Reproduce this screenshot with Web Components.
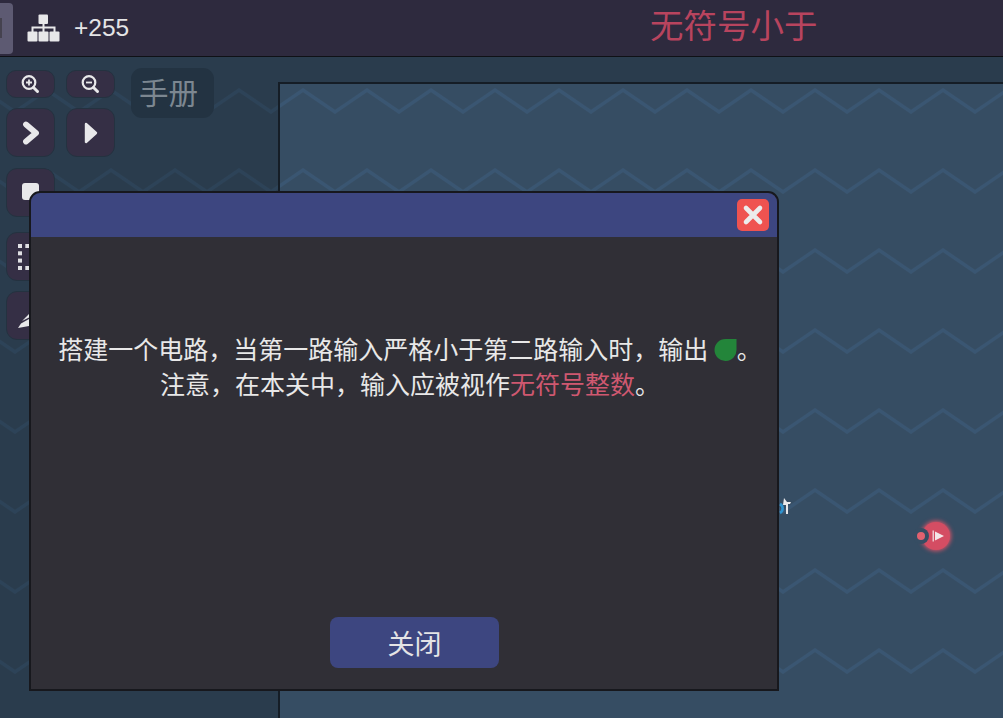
<!DOCTYPE html>
<html lang="zh">
<head>
<meta charset="utf-8">
<title>无符号小于</title>
<style>
  html, body { margin: 0; height: 100%; overflow: hidden; background: #2a3c4d; }
  body { font-family: "Liberation Sans", "Noto Sans CJK SC", sans-serif; }
  em { font-style: normal; color: #cf5870; }
</style>
</head>
<body>
<game-screen>
  <top-bar slot="top" count="+255" title-text="无符号小于"></top-bar>
  <tool-panel slot="side"></tool-panel>
  <circuit-canvas slot="main"></circuit-canvas>
  <level-dialog slot="overlay">
    搭建一个电路，当第一路输入严格小于第二路输入时，输出 <leaf-mark></leaf-mark>。<br>注意，在本关中，输入应被视作<em>无符号整数</em>。
  </level-dialog>
</game-screen>

<script>
const zigzag = (color) =>
  `url("data:image/svg+xml,${encodeURIComponent(`<svg xmlns='http://www.w3.org/2000/svg' width='64' height='80'><path d='M-16 30L16 8L48 30L80 8' fill='none' stroke='${color}' stroke-width='3.500'/></svg>`)}")`;

class GameScreen extends HTMLElement {
  connectedCallback() {
    this.attachShadow({ mode: 'open' });
    this.shadowRoot.innerHTML = `
      <style>
        :host { display: flex; flex-direction: column; position: relative; width: 1003px; height: 718px; overflow: hidden; }
        .body {
          flex: 1;
          display: grid;
          grid-template-columns: 278px 1fr;
          min-height: 0;
          background: #2a3c4d ${zigzag('#2d4358')} 31px 25px;
        }
      </style>
      <slot name="top"></slot>
      <div class="body">
        <slot name="side"></slot>
        <slot name="main"></slot>
      </div>
      <slot name="overlay"></slot>
    `;
  }
}

class TopBar extends HTMLElement {
  connectedCallback() {
    this.attachShadow({ mode: 'open' });
    this.shadowRoot.innerHTML = `
      <style>
        :host {
          display: flex;
          align-items: center;
          height: 56px;
          background: #2e2a3e;
          border-bottom: 1px solid #0f1116;
          color: #e4e4e6;
        }
        .tab { width: 13px; height: 51px; background: #5d5a72; border-radius: 0 4px 4px 0; display: flex; align-items: center; }
        .tab i { display: block; width: 2px; height: 20px; background: #45424f; }
        svg { width: 33px; height: 28px; margin-left: 14px; flex: none; }
        .count { margin-left: 14px; font-size: 24.500px; }
        .title {
          position: absolute;
          left: 650px;
          top: 2px;
          font: 33.500px/44px "Noto Sans CJK SC", "Liberation Sans", sans-serif;
          color: #b8445e;
          white-space: nowrap;
        }
      </style>
      <div class="tab"><i></i></div>
      <svg viewBox="0 0 33 28" fill="#e8e8ea">
        <rect x="11.500" y="0.500" width="9.500" height="9.500" rx="1"/>
        <rect x="0.500" y="17.500" width="10" height="10" rx="1"/>
        <rect x="11.500" y="17.500" width="10" height="10" rx="1"/>
        <rect x="22.500" y="17.500" width="10" height="10" rx="1"/>
        <path d="M15.500 9h2v3.500h11v6h-2v-4h-9v4h-2v-4h-9v4h-2v-6h11z"/>
      </svg>
      <span class="count">${this.getAttribute('count')}</span>
      <span class="title">${this.getAttribute('title-text')}</span>
    `;
  }
}

const toolIcons = {
  zoomIn: `<svg width="19" height="19" viewBox="0 0 19 19" fill="none" stroke="#e8e8ea" stroke-width="2.200"><circle cx="8" cy="7.500" r="6.300"/><path d="M12.500 12.500l4 4" stroke-width="3" stroke-linecap="round"/><path d="M5 7.500h6M8 4.500v6" stroke-width="1.800"/></svg>`,
  zoomOut: `<svg width="19" height="19" viewBox="0 0 19 19" fill="none" stroke="#e8e8ea" stroke-width="2.200"><circle cx="8" cy="7.500" r="6.300"/><path d="M12.500 12.500l4 4" stroke-width="3" stroke-linecap="round"/><path d="M5 7.500h6" stroke-width="1.800"/></svg>`,
  chevron: `<svg width="20" height="24" viewBox="0 0 20 24" fill="none" stroke="#e8e8ea" stroke-width="5.800" stroke-linecap="round" stroke-linejoin="round"><path d="M5 3.500l10 8.500l-10 8.500"/></svg>`,
  play: `<svg width="20" height="24" viewBox="0 0 20 24" fill="#e8e8ea" stroke="#e8e8ea" stroke-width="2.400" stroke-linejoin="round"><path d="M5 3L15 12L5 21z"/></svg>`,
  stop: `<svg width="20" height="20" viewBox="0 0 20 20"><rect x="1" y="0" width="17" height="17" rx="3" fill="#e8e8ea"/></svg>`,
  select: `<svg width="26" height="26" viewBox="0 0 26 26" fill="#e0e0e4"><rect x="0" y="0" width="4" height="4"/><rect x="7.300" y="0" width="4" height="4"/><rect x="14.600" y="0" width="4" height="4"/><rect x="0" y="7.300" width="4" height="4"/><rect x="0" y="14.600" width="4" height="4"/><rect x="0" y="22" width="4" height="4"/><rect x="7.300" y="22" width="4" height="4"/><rect x="14.600" y="22" width="4" height="4"/></svg>`,
  eraser: `<svg width="26" height="26" viewBox="0 0 26 26" fill="#e8e8ea"><path d="M0 25L3 20.500L11 16V23z"/><path d="M4 18L11 11L26 1V8L11 14.500z"/></svg>`,
};

class ToolButton extends HTMLElement {
  connectedCallback() {
    this.attachShadow({ mode: 'open' });
    this.shadowRoot.innerHTML = `
      <style>
        :host {
          display: flex;
          align-items: center;
          justify-content: center;
          box-sizing: border-box;
          width: 49px;
          height: 49px;
          background: #352f45;
          border: 1px solid #243240;
          border-radius: 11px;
        }
        :host([small]) { height: 28px; border-radius: 10px; }
        svg { display: block; }
      </style>
      ${toolIcons[this.getAttribute('icon')] || ''}
    `;
  }
}

class ManualChip extends HTMLElement {
  connectedCallback() {
    this.attachShadow({ mode: 'open' });
    this.shadowRoot.innerHTML = `
      <style>
        :host {
          display: flex;
          align-items: center;
          justify-content: center;
          box-sizing: border-box;
          width: 83px;
          height: 50px;
          padding: 0 8px 2px 0;
          background: #233342;
          border-radius: 11px;
          color: #7c8791;
          font: 29.500px/1 "Noto Sans CJK SC", sans-serif;
        }
      </style>
      <slot></slot>
    `;
  }
}

class ToolPanel extends HTMLElement {
  connectedCallback() {
    this.attachShadow({ mode: 'open' });
    this.shadowRoot.innerHTML = `
      <style>
        :host { display: flex; align-items: flex-start; gap: 16px; padding: 11px 0 0 6px; }
        .tools { display: grid; grid-template-columns: 49px 49px; column-gap: 11px; margin-top: 2px; }
        .zoom { margin-bottom: 10px; }
        .a { margin-bottom: 11px; }
        .b { margin-bottom: 15px; grid-column: 1; }
        .c { margin-bottom: 10px; grid-column: 1; }
        .d { grid-column: 1; }
      </style>
      <div class="tools">
        <tool-button class="zoom" small icon="zoomIn"></tool-button>
        <tool-button class="zoom" small icon="zoomOut"></tool-button>
        <tool-button class="a" icon="chevron"></tool-button>
        <tool-button class="a" icon="play"></tool-button>
        <tool-button class="b" icon="stop"></tool-button>
        <tool-button class="c" icon="select"></tool-button>
        <tool-button class="d" icon="eraser"></tool-button>
      </div>
      <manual-chip>手册</manual-chip>
    `;
  }
}

class CircuitCanvas extends HTMLElement {
  connectedCallback() {
    this.attachShadow({ mode: 'open' });
    this.shadowRoot.innerHTML = `
      <style>
        :host { display: block; margin-top: 25px; position: relative; box-sizing: border-box; height: 636px;
          background: #364d63 ${zigzag('#3a5672')} 7px -2px;
          border-left: 2px solid #151d26;
          border-top: 2px solid #151d26;
        }
        .wire { position: absolute; left: 499px; top: 413px; }
        .dot {
          position: absolute;
          left: 637px;
          top: 448px;
          width: 8px;
          height: 8px;
          border-radius: 50%;
          background: #e2616f;
          box-shadow: 0 0 0 4px #364d63;
        }
        .port {
          position: absolute;
          left: 642px;
          top: 438px;
          width: 28px;
          height: 28px;
          border-radius: 50%;
          background: #d44d63;
          box-shadow: 0 0 4px 1px #dd5468;
          display: flex;
          align-items: center;
          justify-content: center;
        }
        .port svg { margin-left: 5px; }
      </style>
      <svg class="wire" width="14" height="20" viewBox="0 0 14 20">
        <path d="M1 7c3.500 2 3.500 7 0 9" fill="none" stroke="#2f93cf" stroke-width="2.600"/>
        <path d="M5 1l3 4h4l-1 2H9v10H7V8H4z" fill="#e8e8ea"/>
      </svg>
      <div class="port">
        <svg width="13" height="12" viewBox="0 0 13 12" fill="#f3e6e8"><rect x="0.500" y="0.500" width="1.500" height="11" opacity=".8"/><path d="M3 1.500L12 6L3 10.500z"/></svg>
      </div>
      <span class="dot"></span>
    `;
  }
}

class LeafMark extends HTMLElement {
  connectedCallback() {
    this.attachShadow({ mode: 'open' });
    this.shadowRoot.innerHTML = `
      <style>
        :host { display: inline-block; width: 23px; height: 23px; vertical-align: -2px; }
        svg { display: block; }
      </style>
      <svg width="23" height="23" viewBox="0 0 23 23"><path d="M11.500 1H22.500V11.500A11 11 0 1 1 11.500 1z" fill="#23853a"/></svg>
    `;
  }
}

class LevelDialog extends HTMLElement {
  connectedCallback() {
    this.attachShadow({ mode: 'open' });
    this.shadowRoot.innerHTML = `
      <style>
        :host {
          position: absolute;
          left: 29px;
          top: 191px;
          width: 750px;
          height: 500px;
          box-sizing: border-box;
          display: flex;
          flex-direction: column;
          background: #302f36;
          border: 2px solid #17181d;
          border-radius: 11px 11px 0 0;
          overflow: hidden;
          font-family: "Noto Sans CJK SC", "Liberation Sans", sans-serif;
        }
        header {
          flex: none;
          height: 44px;
          background: #3d4680;
          display: flex;
          justify-content: flex-end;
          align-items: flex-start;
          padding: 6px 8px 0 0;
          box-sizing: border-box;
        }
        .x {
          width: 32px;
          height: 32px;
          background: #ef5350;
          border-radius: 5px;
          display: flex;
          align-items: center;
          justify-content: center;
        }
        .text {
          flex: 1;
          padding: 94px 0 0 12px;
          text-align: center;
          font-size: 25px;
          line-height: 35px;
          color: #e8e8e8;
        }
        footer { flex: none; display: flex; justify-content: center; padding: 0 0 21px 21px; }
        button {
          width: 169px;
          height: 51px;
          border: 0;
          border-radius: 8px;
          background: #3d4680;
          color: #e4e4e6;
          font: 27px/1 "Noto Sans CJK SC", sans-serif;
          padding: 0;
        }
      </style>
      <header>
        <div class="x">
          <svg width="22" height="22" viewBox="0 0 22 22" stroke="#ececec" stroke-width="4.600" stroke-linecap="round"><path d="M4 4l14 14M18 4L4 18"/></svg>
        </div>
      </header>
      <div class="text"><slot></slot></div>
      <footer><button>关闭</button></footer>
    `;
  }
}

customElements.define('game-screen', GameScreen);
customElements.define('top-bar', TopBar);
customElements.define('tool-button', ToolButton);
customElements.define('manual-chip', ManualChip);
customElements.define('tool-panel', ToolPanel);
customElements.define('circuit-canvas', CircuitCanvas);
customElements.define('leaf-mark', LeafMark);
customElements.define('level-dialog', LevelDialog);
</script>
</body>
</html>
